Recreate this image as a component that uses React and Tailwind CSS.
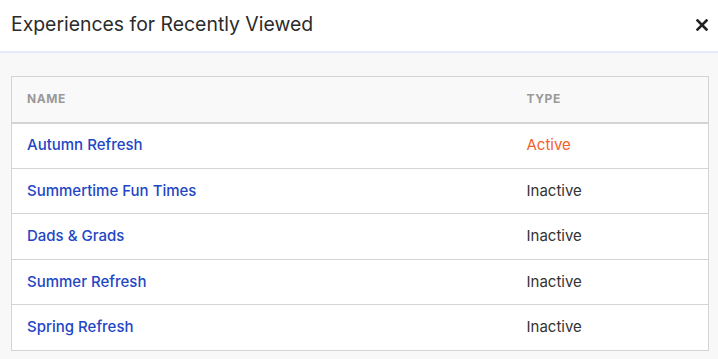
const rows = [
  { name: "Autumn Refresh", type: "Active" },
  { name: "Summertime Fun Times", type: "Inactive" },
  { name: "Dads & Grads", type: "Inactive" },
  { name: "Summer Refresh", type: "Inactive" },
  { name: "Spring Refresh", type: "Inactive" },
];

export default function App() {
  return (
    <div className="w-[718px] h-[359px] bg-[#f8f8f8] font-['Inter',sans-serif] overflow-hidden">
      {/* Modal header */}
      <div className="h-[53px] bg-white border-b-2 border-[#e4ebfb] flex items-center justify-between pl-[11px] pr-[10px]">
        <h2 className="text-[19.4px] text-[#2b2b2b] leading-none -mt-[2px]">Experiences for Recently Viewed</h2>
        <button aria-label="Close" className="text-[#222] -mt-[2px]">
          <svg width="12" height="12" viewBox="0 0 12 12">
            <path d="M1.5 1.5 L10.5 10.5 M10.5 1.5 L1.5 10.5" stroke="currentColor" strokeWidth="2.6" strokeLinecap="square" />
          </svg>
        </button>
      </div>

      {/* Table */}
      <div className="pt-[23px] pl-[11px] pr-[9px]">
        <table className="w-full border border-[#d4d4d4] border-collapse bg-white text-[15px]">
          <thead>
            <tr className="bg-[#f9f9f9] h-[46px] border-b-2 border-[#d4d4d4]">
              <th className="w-[500px] pl-[15px] text-left text-[12px] font-bold tracking-[0.6px] text-[#9a9a9a]">NAME</th>
              <th className="pl-[15px] text-left text-[12px] font-bold tracking-[0.6px] text-[#9a9a9a]">TYPE</th>
            </tr>
          </thead>
          <tbody>
            {rows.map((r) => (
              <tr key={r.name} className="h-[45.5px] border-t border-[#d4d4d4]">
                <td className="pl-[15px] font-medium text-[#2346c4]">{r.name}</td>
                <td className={r.type === "Active" ? "pl-[15px] text-[#f4602b]" : "pl-[15px] text-[#333]"}>{r.type}</td>
              </tr>
            ))}
          </tbody>
        </table>
      </div>
    </div>
  );
}
